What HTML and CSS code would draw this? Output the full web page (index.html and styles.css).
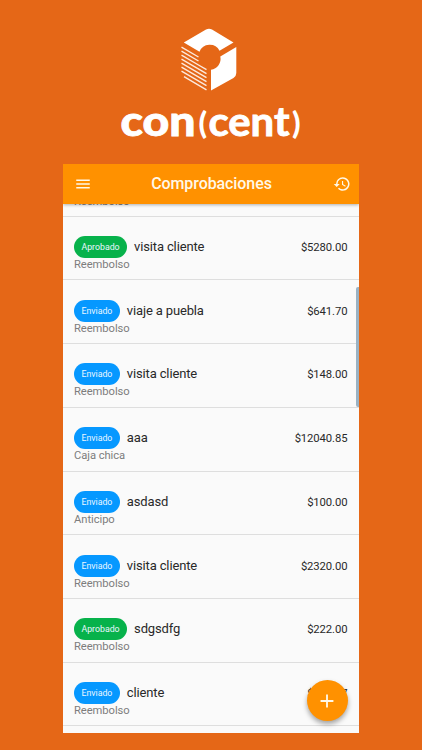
FILE: index.html
```html
<!DOCTYPE html>
<html lang="es">
<head>
<meta charset="utf-8">
<title>Comprobaciones</title>
<link rel="stylesheet" href="styles.css">
</head>
<body>
<header class="brand">
  <svg class="cube" viewBox="0 0 56 64" aria-hidden="true">
    <path fill="#fff" d="M2.8 14.4 25 1.5Q28 0 31 1.5L52.5 14.4 38.5 22.8A11 11 0 0 0 18.5 23.8Z"/>
    <path fill="#fff" d="M55.3 19V45Q55.3 48 52.5 50L30 62.5V41.8A11 11 0 0 0 39.3 28.6Z"/>
    <path class="hatch" d="M.5 19.2 17.5 29M.5 23.2 17.5 33M.5 27.2 17.5 37M.5 31.2 25.5 45.6M.5 35.2 25.5 49.6M.5 39.2 25.5 53.6M.5 43.2 25.5 57.6M3 48.7 25.5 61.8M17.5 37 25.5 41.6"/>
  </svg>
  <svg class="wordmark" viewBox="0 0 200 60">
    <text class="con" x="9.5" y="40" textLength="75" lengthAdjust="spacingAndGlyphs">con</text>
    <text class="paren" x="87.5" y="37.5">(</text>
    <text class="cent" x="97.5" y="40" textLength="81" lengthAdjust="spacingAndGlyphs">cent</text>
    <text class="paren" x="181" y="37.5">)</text>
  </svg>
</header>
<main class="phone">
  <div class="bar">
    <svg class="icon" viewBox="0 0 24 24"><path d="M3 18h18v-2H3v2zm0-5h18v-2H3v2zm0-7v2h18V6H3z"/></svg>
    <h1>Comprobaciones</h1>
    <svg class="icon" viewBox="0 0 24 24"><path d="M13 3a9 9 0 0 0-9 9H1l3.89 3.89.07.14L9 12H6a7 7 0 1 1 2.06 4.94l-1.42 1.42A9 9 0 1 0 13 3zm-1 5v5l4.28 2.54.72-1.21-3.5-2.08V8H12z"/></svg>
  </div>
  <div class="list">
    <div class="row partial"><div class="sub">Reembolso</div></div>
    <div class="row"><div><div class="line"><span class="badge ok">Aprobado</span><span class="title">visita cliente</span></div><div class="sub">Reembolso</div></div><span class="amount">$5280.00</span></div>
    <div class="row"><div><div class="line"><span class="badge">Enviado</span><span class="title">viaje a puebla</span></div><div class="sub">Reembolso</div></div><span class="amount">$641.70</span></div>
    <div class="row"><div><div class="line"><span class="badge">Enviado</span><span class="title">visita cliente</span></div><div class="sub">Reembolso</div></div><span class="amount">$148.00</span></div>
    <div class="row"><div><div class="line"><span class="badge">Enviado</span><span class="title">aaa</span></div><div class="sub">Caja chica</div></div><span class="amount">$12040.85</span></div>
    <div class="row"><div><div class="line"><span class="badge">Enviado</span><span class="title">asdasd</span></div><div class="sub">Anticipo</div></div><span class="amount">$100.00</span></div>
    <div class="row"><div><div class="line"><span class="badge">Enviado</span><span class="title">visita cliente</span></div><div class="sub">Reembolso</div></div><span class="amount">$2320.00</span></div>
    <div class="row"><div><div class="line"><span class="badge ok">Aprobado</span><span class="title">sdgsdfg</span></div><div class="sub">Reembolso</div></div><span class="amount">$222.00</span></div>
    <div class="row"><div><div class="line"><span class="badge">Enviado</span><span class="title">cliente</span></div><div class="sub">Reembolso</div></div><span class="amount">$377.77</span></div>
  </div>
  <div class="scrollbar"></div>
  <button class="fab" aria-label="Agregar"><svg viewBox="0 0 24 24"><path d="M19 13h-6v6h-2v-6H5v-2h6V5h2v6h6v2z"/></svg></button>
</main>
</body>
</html>
```
FILE: styles.css
```css
* { box-sizing: border-box; }
body {
  margin: 0;
  height: 750px;
  overflow: hidden;
  background: #e56717;
  font-family: Roboto, "Liberation Sans", sans-serif;
}
.brand {
  height: 164px;
  padding-top: 27.5px;
  display: flex;
  flex-direction: column;
  align-items: center;
}
.cube { flex: none; width: 56px; height: 64px; margin-right: 5px; }
.hatch { fill: none; stroke: #fff; stroke-width: 1.4; opacity: .85; }
.wordmark { flex: none; width: 200px; height: 60px; margin-top: 4.5px; }
.wordmark text { fill: #fff; font-family: Lato, sans-serif; font-weight: 900; }
.wordmark .con { font-size: 41px; stroke: #fff; stroke-width: .8; }
.wordmark .cent { font-size: 41px; font-weight: 700; stroke: #fff; stroke-width: .9; }
.wordmark .paren { font-size: 31px; }
.phone {
  position: relative;
  width: 296px;
  height: 569px;
  margin-left: 63px;
  background: #fafafa;
  overflow: hidden;
}
.bar {
  position: relative;
  z-index: 1;
  height: 40px;
  padding: 0 8px 1px 11px;
  display: flex;
  align-items: center;
  justify-content: space-between;
  background: #ff9100;
  box-shadow: 0 1px 3px rgba(0, 0, 0, .3);
}
.bar h1 { margin: 0 2px 0 0; color: #fff8e8; font-size: 16px; letter-spacing: -.08px; font-weight: 500; line-height: 20px; }
.icon { width: 18px; height: 18px; fill: #fff8e8; }
.row {
  height: 63.7px;
  padding: 19.3px 11.5px 0 11px;
  border-bottom: 1px solid #dedede;
  display: flex;
  justify-content: space-between;
}
.row.partial { height: 12.8px; padding-top: 0; align-items: flex-end; }
.partial .sub { margin-bottom: 8px; }
.line { display: flex; align-items: center; height: 22px; }
.badge {
  height: 22px;
  padding: 0 7.5px;
  border-radius: 11px;
  background: #0698ff;
  color: #e9f6ff;
  font-size: 8.8px;
  letter-spacing: -.03px;
  line-height: 22px;
}
.badge.ok { background: #07b24b; }
.title { margin-left: 7px; color: #292929; font-size: 13px; letter-spacing: -.14px; line-height: 22px; }
.sub { color: #7d7d7d; font-size: 11.2px; letter-spacing: -.05px; line-height: 13px; }
.amount { color: #292929; font-size: 11.3px; letter-spacing: -.1px; line-height: 22px; padding-top: 1px; }
.scrollbar {
  position: absolute;
  top: 123px;
  right: 0;
  width: 3px;
  height: 120px;
  border-radius: 2px 0 0 2px;
  background: #9bb2c3;
}
.fab {
  position: absolute;
  left: 244px;
  top: 516px;
  width: 41px;
  height: 41px;
  padding: 0;
  border: 0;
  border-radius: 50%;
  display: grid;
  place-items: center;
  background: #ff9100;
  box-shadow: 0 3px 5px rgba(0, 0, 0, .35);
}
.fab svg { width: 22px; height: 22px; margin-right: 1px; fill: #fff8e8; }
```
